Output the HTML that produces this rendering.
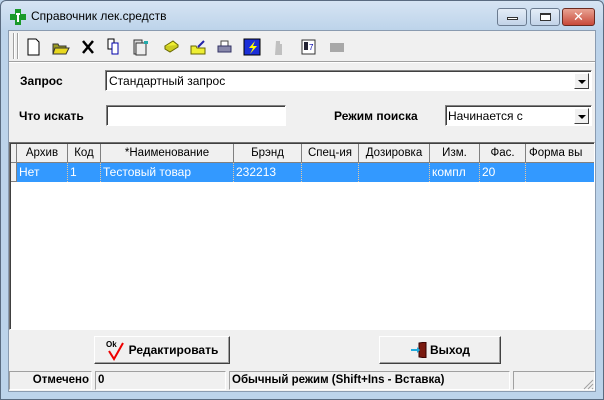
<!DOCTYPE html>
<html><head><meta charset="utf-8"><style>
*{box-sizing:border-box;margin:0;padding:0}
body{width:604px;height:400px;overflow:hidden;background:#bcd3ea;font-family:"Liberation Sans","DejaVu Sans",sans-serif;font-size:12px;position:relative}
.abs{position:absolute}
.win{left:0;top:0;width:604px;height:400px;border:1px solid #5a6b80;border-radius:6px 6px 0 0;background:linear-gradient(#d6e4f3,#bcd3ea 30px)}
.client{left:8px;top:30px;width:588px;height:362px;background:#f0f0f0;border:1px solid #8a9bb0}
.combo{background:#fff;border:1px solid;border-color:#828282 #fff #fff #828282;box-shadow:inset 1px 1px 0 #404040}
.arrow{position:absolute;right:2px;top:2px;width:15px;height:16px;background:#f0f0f0;border:1px solid;border-color:#fff #404040 #404040 #fff}
.arrow:after{content:"";position:absolute;left:3px;top:6px;border-left:4px solid transparent;border-right:4px solid transparent;border-top:4px solid #000}
.lbl{font-weight:bold;font-size:12px}
.grid{left:9px;top:142px;width:586px;height:188px;background:#fff;border:1px solid;border-color:#707070 #fff #fff #707070;box-shadow:inset 1px 1px 0 #404040;overflow:hidden}
.h,.c{position:absolute;height:19px;line-height:18px;white-space:nowrap;overflow:hidden}
.h{top:1px;background:#f0f0f0;border-right:1px solid #808080;border-bottom:1px solid #808080;text-align:center;font-size:11.5px}
.c{top:20px;background:#3399ff;color:#fff;border-right:1px dotted #e8c8a0;padding-left:2px}
.btn{background:#f0f0f0;border:1px solid;border-color:#fff #404040 #404040 #fff;box-shadow:inset -1px -1px 0 #a0a0a0;font-weight:bold;font-size:12px;display:flex;align-items:center;justify-content:center}
.sp{top:371px;height:19px;border:1px solid;border-color:#a0a0a0 #fff #fff #a0a0a0;font-weight:bold;line-height:17px;white-space:nowrap;font-size:11.5px}
.wb{top:8px;height:18px;border:1px solid #6b7b90;border-radius:3px;background:linear-gradient(#e4edf7,#c2d3e8)}
</style></head><body>
<div class="abs win"></div>
<svg class="abs" style="left:10px;top:9px" width="16" height="16"><path d="M5 0h6v5h5v6h-5v5H5v-5H0V5h5z" fill="#1a9a2a"/><path d="M6 4h4v2H6zM7 6h2v7H7z" fill="#fff"/></svg>
<div class="abs" style="left:31px;top:9px;font-size:12px;color:#000">Справочник лек.средств</div>
<div class="abs wb" style="left:497px;width:30px"><div style="margin:8px auto 0;width:11px;height:3px;border:1px solid #333;background:#fff"></div></div>
<div class="abs wb" style="left:530px;width:30px"><div style="margin:4px auto 0;width:11px;height:8px;border:1px solid #333;border-top-width:2px;background:#fff"></div></div>
<div class="abs" style="left:562px;top:8px;width:33px;height:18px;border:1px solid #6b2a20;border-radius:3px;background:linear-gradient(#e8a393,#c8493a);color:#fff;font-weight:bold;text-align:center;line-height:16px;font-size:13px">✕</div>
<div class="abs client"></div>
<div class="abs" style="left:13px;top:33px;width:2px;height:26px;border-left:1px solid #a0a0a0;border-right:1px solid #fff"></div>
<div class="abs" style="left:17px;top:33px;width:2px;height:26px;border-left:1px solid #a0a0a0;border-right:1px solid #fff"></div>
<svg class="abs" style="left:26px;top:38px" width="320" height="18">
<path d="M2 1h8l3 3v13H2z" fill="#fff" stroke="#000"/>
<path d="M27 6h5l1 2h7v8H27z" fill="#9a9a20" stroke="#333"/><path d="M29 10h14l-3 6H27z" fill="#e8d820" stroke="#333"/>
<path d="M57 3l10 12M67 3L57 15" stroke="#000" stroke-width="2.5"/>
<path d="M82 1h6v10h-6z" fill="#fff" stroke="#000"/><path d="M86 5h6v11h-6z" fill="#fff" stroke="#00a"/>
<path d="M108 2h8v14h-8z" fill="#ddd" stroke="#333"/><path d="M110 5h10v12h-10z" fill="#eee" stroke="#333"/><path d="M118 3h4v3h-4z" fill="#2aa"/>
<path d="M139 8l8-5 5 4-8 5z" fill="#ee3" stroke="#660"/><path d="M139 8l0 3 5 3 8-5v-2" fill="#cc2" stroke="#660"/>
<path d="M165 8h5l1 2h8v6H165z" fill="#ee3" stroke="#660"/><path d="M172 9l6-6" stroke="#22a" stroke-width="2"/>
<path d="M195 3h7v5h-7z" fill="#fff" stroke="#444"/><path d="M192 8h13v6h-13z" fill="#88a" stroke="#336"/>
<rect x="218" y="1" width="16" height="16" fill="#1b2fd8" stroke="#000"/><path d="M229 3l-6 7h4l-3 6 7-8h-4z" fill="#ff0"/>
<path d="M250 3h4v3h2v11h-7z" fill="#c0c0c0"/>
<rect x="276" y="2" width="13" height="14" fill="#fff" stroke="#333"/><rect x="278" y="4" width="4" height="8" fill="#223"/><text x="283" y="12" font-size="8" fill="#00a" font-family="Liberation Sans">7</text>
<rect x="304" y="5" width="14" height="9" fill="#a8a8a8"/>
</svg>
<div class="abs" style="left:9px;top:61px;width:586px;height:2px;border-top:1px solid #a0a0a0;border-bottom:1px solid #fff"></div>
<div class="abs lbl" style="left:20px;top:74px">Запрос</div>
<div class="abs combo" style="left:105px;top:70px;width:487px;height:21px"><span style="position:absolute;left:3px;top:3px">Стандартный запрос</span><div class="arrow"></div></div>
<div class="abs lbl" style="left:19px;top:109px">Что искать</div>
<div class="abs combo" style="left:106px;top:105px;width:180px;height:21px"></div>
<div class="abs lbl" style="left:334px;top:109px">Режим поиска</div>
<div class="abs combo" style="left:445px;top:105px;width:147px;height:21px"><span style="position:absolute;left:2px;top:3px">Начинается с</span><div class="arrow"></div></div>
<div class="abs grid">
<div class="h" style="left:1px;width:6px"></div>
<div class="h" style="left:7px;width:51px">Архив</div>
<div class="h" style="left:58px;width:33px">Код</div>
<div class="h" style="left:91px;width:133px">*Наименование</div>
<div class="h" style="left:224px;width:68px">Брэнд</div>
<div class="h" style="left:292px;width:57px">Спец-ия</div>
<div class="h" style="left:349px;width:71px">Дозировка</div>
<div class="h" style="left:420px;width:50px">Изм.</div>
<div class="h" style="left:470px;width:46px">Фас.</div>
<div class="h" style="left:516px;width:70px;text-align:left;padding-left:3px">Форма вы</div>
<div class="abs" style="left:1px;top:20px;width:6px;height:19px;background:#f0f0f0;border-right:1px solid #808080;border-bottom:1px solid #808080"></div>
<div class="c" style="left:7px;width:51px">Нет</div>
<div class="c" style="left:58px;width:33px">1</div>
<div class="c" style="left:91px;width:133px">Тестовый товар</div>
<div class="c" style="left:224px;width:68px">232213</div>
<div class="c" style="left:292px;width:57px"></div>
<div class="c" style="left:349px;width:71px"></div>
<div class="c" style="left:420px;width:50px">компл</div>
<div class="c" style="left:470px;width:46px">20</div>
<div class="c" style="left:516px;width:70px"></div>
</div>
<div class="abs btn" style="left:94px;top:336px;width:136px;height:28px"><svg width="20" height="22" style="margin-right:3px"><text x="0" y="8" font-size="8" font-family="Liberation Sans">Ok</text><path d="M3 12l5 8 9-16" fill="none" stroke="#e00" stroke-width="2"/></svg>Редактировать</div>
<div class="abs btn" style="left:379px;top:336px;width:122px;height:28px"><svg width="18" height="16" style="margin-right:2px"><path d="M9 1l7-1v16l-7-1z" fill="#7a1a10" stroke="#300"/><path d="M1 7h6V5l3 3-3 3V9H1z" fill="#2ad"/></svg>Выход</div>
<div class="abs sp" style="left:9px;width:83px;text-align:right;padding-right:2px">Отмечено</div>
<div class="abs sp" style="left:95px;width:131px;padding-left:2px">0</div>
<div class="abs sp" style="left:229px;width:281px;padding-left:2px">Обычный режим (Shift+Ins - Вставка)</div>
<div class="abs sp" style="left:513px;width:82px"></div>
<svg class="abs" style="left:582px;top:378px" width="12" height="12"><path d="M11 2L2 11M11 6L6 11M11 10L10 11" stroke="#a0a0a0"/></svg>
</body></html>
